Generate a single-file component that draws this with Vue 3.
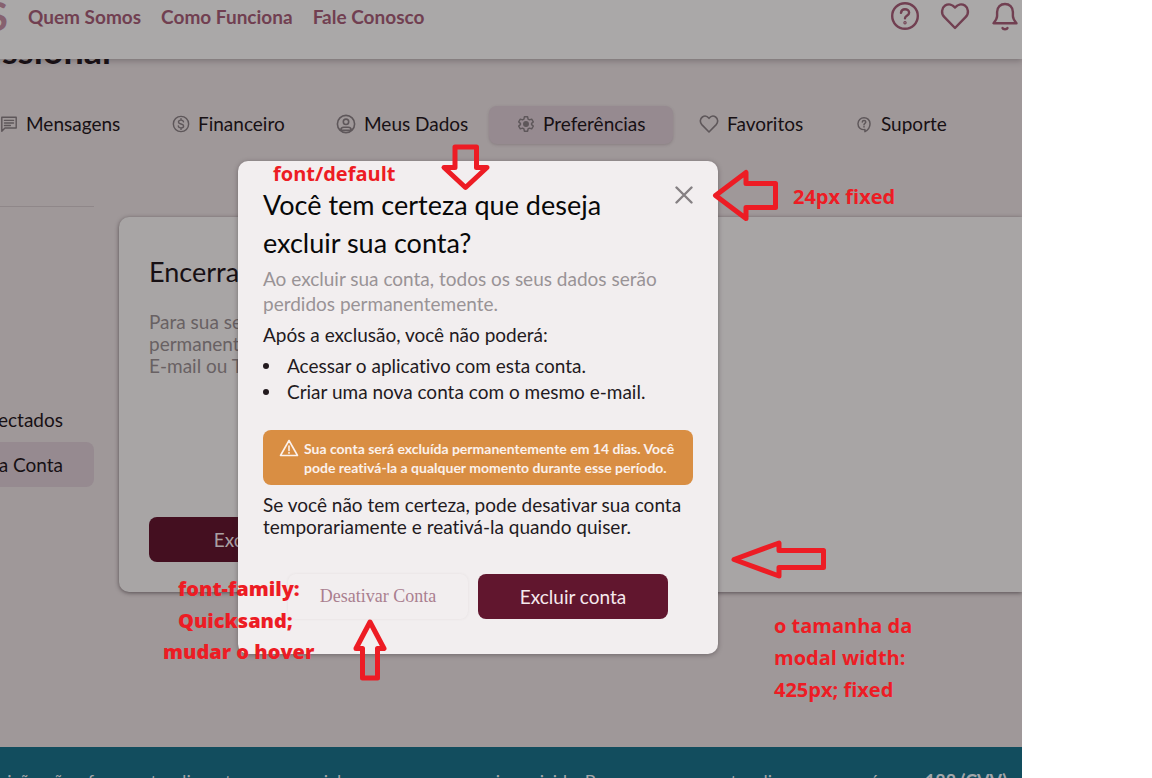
<script setup>
const links = ['Quem Somos', 'Como Funciona', 'Fale Conosco']
const tabs = [
  { name: 'Mensagens', icon: 'message' },
  { name: 'Financeiro', icon: 'dollar' },
  { name: 'Meus Dados', icon: 'user' },
  { name: 'Preferências', icon: 'gear', active: true },
  { name: 'Favoritos', icon: 'heart' },
  { name: 'Suporte', icon: 'support' }
]
const limits = [
  'Acessar o aplicativo com esta conta.',
  'Criar uma nova conta com o mesmo e-mail.'
]
</script>

<template>
  <div class="board">
    <div class="screen">
      <header class="topbar">
        <div class="logo"><span>S</span></div>
        <nav class="links">
          <a v-for="l in links" :key="l" href="#">{{ l }}</a>
        </nav>
        <div class="actions">
          <button type="button" aria-label="Ajuda">
            <svg viewBox="0 0 30 30" class="big"><circle cx="15" cy="15" r="12.8" /><path d="M11 11.800c.3-2.400 2-3.500 4-3.500 2.300 0 4.100 1.400 4.100 3.500 0 3-4.100 3-4.100 5.400" /><circle cx="15" cy="21.800" r=".5" class="dot" /></svg>
          </button>
          <button type="button" aria-label="Favoritos">
            <svg viewBox="0 0 30 30" class="big"><path d="M15 27 4.200 15.900C.8 12.300 1.700 7 5.100 4.600c3.300-2.200 7.400-1.200 9.900 2 2.500-3.200 6.600-4.200 9.900-2 3.400 2.400 4.300 7.700.9 11.300z" /></svg>
          </button>
          <button type="button" aria-label="Notificações">
            <svg viewBox="0 0 30 30" class="big"><path d="M3.500 22.200h23c-2-2.400-3.600-4.200-3.600-7.200v-4C22.900 6 19.400 3 15 3s-7.900 3-7.900 8v4c0 3-1.600 4.800-3.600 7.200zM12.500 27c.6 1.600 4.400 1.600 5 0" /></svg>
          </button>
        </div>
      </header>

      <h1 class="heading"><span>Profissional</span></h1>

      <nav class="tabs">
        <a v-for="t in tabs" :key="t.name" href="#" :class="['tab', t.icon, { active: t.active }]">
          <svg v-if="t.icon === 'message'" viewBox="0 0 20 20"><path d="M2 18V2.500h16v12H5.500zM5 6h10M5 8.800h10M5 11.600h6.500" /></svg>
          <svg v-else-if="t.icon === 'dollar'" viewBox="0 0 20 20"><circle cx="10" cy="10" r="8.500" /><path d="M12.800 7.600C12.500 6.200 11.400 5.700 10 5.700c-1.700 0-2.800.8-2.800 2 0 3 5.700 1.500 5.700 4.500 0 1.300-1.200 2.100-2.900 2.100-1.600 0-2.800-.7-3-2.100M10 4v1.700M10 14.300V16" /></svg>
          <svg v-else-if="t.icon === 'user'" viewBox="0 0 20 20"><circle cx="10" cy="10" r="8.600" /><circle cx="10" cy="7.800" r="2.700" /><path d="M4.800 16.200c0-2 1.200-2.900 3-2.900h4.400c1.800 0 3 .9 3 2.900z" /></svg>
          <svg v-else-if="t.icon === 'gear'" viewBox="0 0 20 20"><path d="M8.200 2h3.600l.5 2.500 1.600.9 2.400-.8 1.800 3.100L16.200 9.300v1.400l1.900 1.600-1.800 3.100-2.400-.8-1.600.9-.5 2.500H8.200l-.5-2.500-1.600-.9-2.400.8-1.800-3.100 1.900-1.600V9.300L1.900 7.700l1.800-3.100 2.400.8 1.600-.9z" /><circle cx="10" cy="10" r="2.500" class="dot" /></svg>
          <svg v-else-if="t.icon === 'heart'" viewBox="0 0 20 20"><path d="M10 18 2.800 10.600C.5 8.100 1.100 4.600 3.400 3 5.600 1.500 8.300 2.200 10 4.300c1.700-2.100 4.400-2.800 6.600-1.300 2.300 1.600 2.900 5.100.6 7.600z" /></svg>
          <svg v-else viewBox="0 0 20 20"><path d="M11 18.500v-2.300c-4.600.5-7.700-2.500-7.700-6.500C3.300 5.800 6.200 3 10 3s6.700 2.800 6.700 6.600c0 4-2.400 7-5.700 8.900z" /><path d="M8.100 7.800C8.200 6.600 9 6.100 10 6.100c1.200 0 2 .7 2 1.700 0 1.500-2 1.500-2 3M10 12.800v.6" /></svg>
          <span>{{ t.name }}</span>
        </a>
      </nav>

      <div class="content">
        <aside class="side">
          <hr />
          <a href="#"><span>Conectados</span></a>
          <a href="#" class="current"><span>Encerrar a Conta</span></a>
        </aside>
        <section class="card">
          <h2>Encerrar</h2>
          <p>Para sua segurança<br />permanente<br />E-mail ou Telefone</p>
          <button type="button">Excluir conta</button>
        </section>
      </div>

      <footer class="footer">
        <p>Essa instituição não oferece atendimento emergencial para pessoas em crise suicida. Para esses momentos, ligue para o número <b>188 (CVV)</b> o</p>
      </footer>

      <div class="modal" role="dialog" aria-labelledby="modal-title">
        <div class="modal-head">
          <h2 id="modal-title">Você tem certeza que deseja excluir sua conta?</h2>
          <button type="button" class="close" aria-label="Fechar">
            <svg viewBox="0 0 18 18"><path d="M1.500 1.500l15 15M16.500 1.500l-15 15" /></svg>
          </button>
        </div>
        <p class="muted">Ao excluir sua conta, todos os seus dados serão<br />perdidos permanentemente.</p>
        <p class="after">Após a exclusão, você não poderá:</p>
        <ul>
          <li v-for="l in limits" :key="l">{{ l }}</li>
        </ul>
        <div class="warning">
          <svg viewBox="0 0 20 20"><path d="M10 1.500 18.500 16.500h-17zM10 7v4.500M10 13.600v.6" /></svg>
          <p>Sua conta será excluída permanentemente em 14 dias. Você<br />pode reativá-la a qualquer momento durante esse período.</p>
        </div>
        <p class="hint">Se você não tem certeza, pode desativar sua conta<br />temporariamente e reativá-la quando quiser.</p>
        <div class="buttons">
          <button type="button" class="ghost">Desativar Conta</button>
          <button type="button" class="primary">Excluir conta</button>
        </div>
      </div>
    </div>

    <div class="notes">
      <p class="note n-font">font/default</p>
      <p class="note n-close">24px fixed</p>
      <p class="note n-size">o tamanha da<br />modal width:<br />425px; fixed</p>
      <p class="note heavy n-family">font-family:<br />Quicksand;</p>
      <p class="note heavy n-hover">mudar o hover</p>
      <svg class="arrows" width="1152" height="778" viewBox="0 0 1152 778">
        <path d="M455 147h21.500v20.500H487L465.500 187.500 444 167.500h11z" />
        <path d="M715.500 195.500 746 172.500v11h29.500v24H746v11z" />
        <path d="M734 559.500 779 543v7.500h44.500v17H779v8.500z" />
        <path d="M370 622l14 26.500h-6.500V678h-15v-29.500H356z" />
      </svg>
    </div>
  </div>
</template>

<style>
body { margin: 0; background: #fff; }
</style>

<style scoped>
.board {
  position: relative;
  height: 100vh;
  min-height: 778px;
  overflow: hidden;
  padding-right: 130px;
  box-sizing: border-box;
  font-family: Lato, "Liberation Sans", sans-serif;
  font-size: 19px;
  font-variant-ligatures: none;
  color: #171014;
}
.screen {
  position: relative;
  display: flex;
  flex-direction: column;
  height: 100%;
  overflow: hidden;
  background: #9f9899;
}
h1, h2, p, ul { margin: 0; padding: 0; font-weight: 400; }
a { color: inherit; text-decoration: none; }
button { font: inherit; border: 0; background: none; padding: 0; cursor: pointer; }
svg { fill: none; stroke: currentColor; stroke-linecap: round; stroke-linejoin: round; }
.dot { fill: currentColor; }

.topbar {
  display: flex;
  flex: none;
  height: 59px;
  background: #aaa8a8;
  box-shadow: 0 2px 6px rgba(40, 30, 35, .3);
  color: #713f51;
  position: relative;
  z-index: 1;
}
.logo {
  display: flex;
  justify-content: flex-end;
  width: 8px;
  overflow: hidden;
  font-size: 40px;
  font-weight: 700;
  line-height: 32px;
  color: #86616f;
}
.links {
  display: flex;
  gap: 20px;
  margin-left: 20px;
  font-weight: 700;
  line-height: 33px;
  white-space: nowrap;
}
.actions { display: flex; gap: 20px; margin-left: auto; margin-right: 2px; height: 32px; align-items: center; }
.actions button { color: inherit; height: 30px; }
.big { display: block; width: 30px; height: 30px; stroke-width: 2.400; }

.heading {
  display: flex;
  flex: none;
  justify-content: flex-end;
  width: 111px;
  height: 38px;
  margin-top: -29px;
  font-size: 36px;
  line-height: 40px;
  font-weight: 700;
}
.tabs {
  display: grid;
  grid-template-columns: 146px 164px 179px 184px 156px 150px;
  margin-top: 38px;
  flex: none;
}
.tab { display: flex; align-items: center; gap: 8px; height: 38px; padding-left: 26px; border-radius: 8px; white-space: nowrap; }
.tab span { line-height: 22px; padding-bottom: 2px; }
.tab.message { padding-left: 0; }
.tab.gear { padding-left: 28px; }
.tab.active { background: #968a90; box-shadow: 0 1px 3px rgba(70, 50, 60, .25); }
.tab svg { flex: none; width: 18px; height: 18px; margin-bottom: 2px; color: #5e575a; stroke-width: 1.600; }
.tab.user svg, .tab.heart svg { width: 20px; height: 20px; }

.content { display: flex; flex: none; gap: 25px; margin-top: 62px; }
.side { width: 94px; overflow: hidden; flex: none; }
.side hr { margin: 0 0 190px; border: 0; border-top: 1px solid #8f8789; }
.side a { display: flex; justify-content: flex-end; height: 45px; padding-right: 31px; align-items: center; white-space: nowrap; border-radius: 0 8px 8px 0; }
.side .current { background: #968a90; }
.card {
  flex: 1;
  margin-top: 11px;
  padding: 30px;
  background: #a8a5a5;
  border-radius: 10px 0 0 10px;
  box-shadow: 0 1px 4px rgba(40, 30, 35, .6);
}
.card h2 { font-size: 27px; line-height: 50px; }
.card p { margin-top: 14px; line-height: 22px; color: #686163; }
.card button {
  display: block;
  width: 236px;
  height: 45px;
  margin-top: 140px;
  border-radius: 8px;
  background: #440f20;
  color: #aaa0a3;
}
.footer { margin-top: auto; height: 31px; overflow: hidden; background: #124d5e; color: #a3a6aa; flex: none; }
.footer p { display: flex; justify-content: flex-end; padding-top: 22px; font-size: 18px; line-height: 24px; white-space: pre; }

.modal {
  position: absolute;
  z-index: 2;
  top: 161px;
  left: 238px;
  width: 480px;
  box-sizing: border-box;
  padding: 25px 25px 35px;
  border-radius: 10px;
  background: #f2eeef;
  box-shadow: 0 1px 5px rgba(40, 30, 35, .4);
  color: #231a1e;
}
.modal-head { display: flex; justify-content: space-between; align-items: flex-start; }
.modal h2 { width: 370px; font-size: 27px; line-height: 38px; color: #080808; }
.close { height: 18px; color: #858083; }
.close svg { display: block; width: 18px; height: 18px; stroke-width: 2.400; }
.muted { margin-top: 4px; line-height: 25px; color: #999396; }
.after { margin-top: 6px; line-height: 25px; }
ul { list-style: none; margin-top: 6px; line-height: 26px; }
li { display: flex; align-items: center; gap: 18px; }
li::before { content: ""; width: 6px; height: 6px; border-radius: 50%; background: currentColor; }
.warning {
  display: flex;
  gap: 5px;
  margin-top: 25px;
  padding: 9px 16px 8px;
  border-radius: 8px;
  background: #d98e43;
  color: #fbf1ec;
  font-size: 14px;
  line-height: 19px;
  white-space: nowrap;
}
.warning p { font-weight: 700; }
.warning svg { flex: none; width: 20px; height: 20px; stroke-width: 1.600; }
.hint { margin-top: 9px; line-height: 22px; white-space: nowrap; }
.buttons { display: flex; justify-content: flex-end; gap: 10px; margin-top: 36px; padding-right: 25px; }
.buttons button { height: 45px; border-radius: 8px; }
.ghost { width: 180px; font-family: "Liberation Serif", serif; font-size: 18px; color: #aa7f8f; box-shadow: 0 0 3px rgba(80, 60, 70, .08); }
.primary { width: 190px; background: #61162e; color: #f5e9ed; }

.notes { position: absolute; inset: 0; z-index: 3; pointer-events: none; }
.note { position: absolute; font-family: "Open Sans", "Noto Sans", sans-serif; font-size: 20px; font-weight: 700; line-height: 32px; color: #ed1c24; white-space: nowrap; }
.heavy { font-weight: 800; }
.n-font { left: 273px; top: 158px; }
.n-close { left: 793px; top: 181px; }
.n-size { left: 774px; top: 610px; }
.n-family { left: 178px; top: 573px; }
.n-hover { left: 163px; top: 636px; }
.arrows { position: absolute; top: 0; left: 0; stroke: #ed1c24; stroke-width: 5; }
</style>
